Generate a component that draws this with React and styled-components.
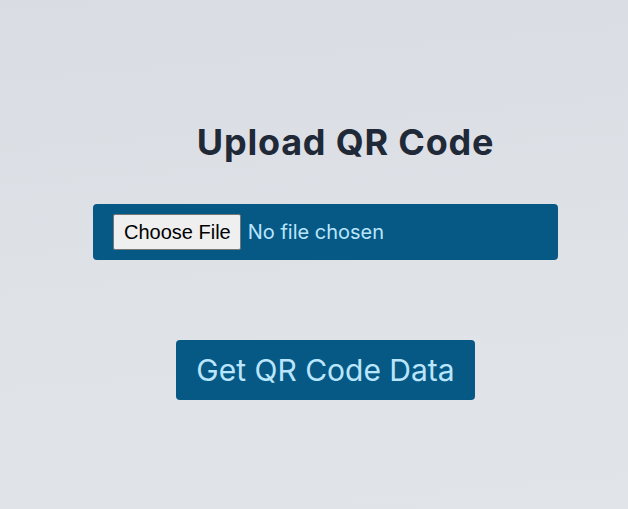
import React from "react";
import styled, { createGlobalStyle } from "styled-components";

const Global = createGlobalStyle`
  html, body { margin: 0; padding: 0; }
  body {
    min-height: 509px;
    background: linear-gradient(175deg, #d9dce2 0%, #dfe2e7 60%, #e1e4e8 100%);
    font-family: Inter, "Noto Sans", sans-serif;
  }
`;

const Page = styled.main`
  min-height: 509px;
  box-sizing: border-box;
  padding: 120px 0 0 93px;
  display: flex;
  flex-direction: column;
  align-items: flex-start;
`;

const Form = styled.form`
  width: 465px;
  display: flex;
  flex-direction: column;
  align-items: center;
`;

const Title = styled.h1`
  margin: 0 0 0 40px;
  font-size: 36px;
  letter-spacing: 0.8px;
  line-height: 44px;
  font-weight: 700;
  color: #1f2937;
`;

const FileBox = styled.div`
  margin-top: 40px;
  width: 100%;
  height: 56px;
  box-sizing: border-box;
  background: #075985;
  border-radius: 4px;
  display: flex;
  align-items: center;
  padding: 0 20px;
`;

const FileInput = styled.input`
  font-family: Inter, sans-serif;
  font-size: 20px;
  color: #bae6fd;
  &::file-selector-button {
    font-family: "Liberation Sans", Arial, sans-serif;
    font-size: 20px;
    color: #000;
    background: #efefef;
    border: 1px solid #767676;
    border-radius: 2px;
    height: 36px;
    padding: 0 9px 0 10px;
    margin-right: 7px;
  }
`;

const Submit = styled.button`
  margin-top: 80px;
  height: 60px;
  padding: 0 20px;
  background: #075985;
  color: #bae6fd;
  border: none;
  border-radius: 4px;
  font-family: Inter, sans-serif;
  font-size: 30px;
  cursor: pointer;
`;

export default function App() {
  return (
    <>
      <Global />
      <Page>
        <Form onSubmit={(e) => e.preventDefault()}>
          <Title>Upload QR Code</Title>
          <FileBox>
            <FileInput type="file" accept="image/*" />
          </FileBox>
          <Submit type="submit">Get QR Code Data</Submit>
        </Form>
      </Page>
    </>
  );
}
